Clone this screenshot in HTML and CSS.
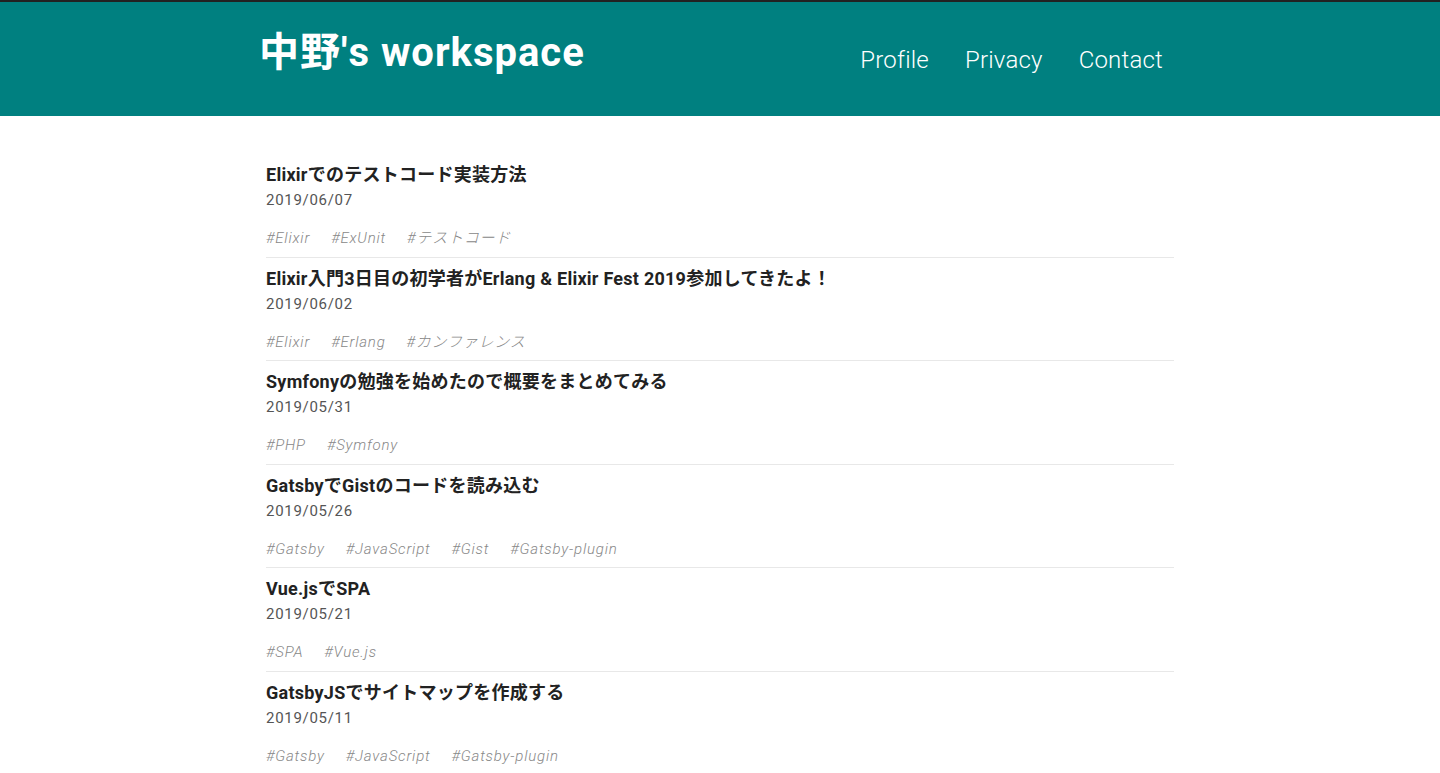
FILE: index.html
```html
<!DOCTYPE html>
<html lang="ja">
<head>
<meta charset="utf-8">
<title>中野's workspace</title>
<link rel="stylesheet" href="styles.css">
</head>
<body>
<header class="site-header">
  <div class="header-inner">
    <h1 class="site-title">中野's workspace</h1>
    <nav class="nav">
      <a href="#">Profile</a>
      <a href="#">Privacy</a>
      <a href="#">Contact</a>
    </nav>
  </div>
</header>
<main class="posts">
  <article class="post">
    <h2 class="post-title">Elixirでのテストコード実装方法</h2>
    <div class="post-date">2019/06/07</div>
    <ul class="tags"><li>#Elixir</li><li>#ExUnit</li><li>#テストコード</li></ul>
  </article>
  <article class="post">
    <h2 class="post-title">Elixir入門3日目の初学者がErlang &amp; Elixir Fest 2019参加してきたよ！</h2>
    <div class="post-date">2019/06/02</div>
    <ul class="tags"><li>#Elixir</li><li>#Erlang</li><li>#カンファレンス</li></ul>
  </article>
  <article class="post">
    <h2 class="post-title">Symfonyの勉強を始めたので概要をまとめてみる</h2>
    <div class="post-date">2019/05/31</div>
    <ul class="tags"><li>#PHP</li><li>#Symfony</li></ul>
  </article>
  <article class="post">
    <h2 class="post-title">GatsbyでGistのコードを読み込む</h2>
    <div class="post-date">2019/05/26</div>
    <ul class="tags"><li>#Gatsby</li><li>#JavaScript</li><li>#Gist</li><li>#Gatsby-plugin</li></ul>
  </article>
  <article class="post">
    <h2 class="post-title">Vue.jsでSPA</h2>
    <div class="post-date">2019/05/21</div>
    <ul class="tags"><li>#SPA</li><li>#Vue.js</li></ul>
  </article>
  <article class="post">
    <h2 class="post-title">GatsbyJSでサイトマップを作成する</h2>
    <div class="post-date">2019/05/11</div>
    <ul class="tags"><li>#Gatsby</li><li>#JavaScript</li><li>#Gatsby-plugin</li></ul>
  </article>
</main>
</body>
</html>
```
FILE: styles.css
```css
html, body {
  margin: 0;
  padding: 0;
}
body {
  font-family: "Roboto", "Noto Sans CJK JP", sans-serif;
  color: #222;
  background: #fff;
}
.site-header {
  background: #008080;
  border-top: 2px solid #222;
  height: 114px;
}
.header-inner {
  width: 904px;
  margin: 0 auto;
  padding-right: 18px;
  display: flex;
  justify-content: space-between;
  align-items: flex-start;
}
.site-title {
  margin: 28px 0 0;
  color: #fff;
  font-size: 40px;
  font-weight: 700;
  line-height: 46px;
  letter-spacing: 1px;
}
.nav {
  display: flex;
  gap: 36px;
  margin-top: 43px;
}
.nav a {
  color: #fff;
  text-decoration: none;
  font-size: 24px;
  font-weight: 300;
  line-height: 30px;
  letter-spacing: 0.2px;
}
.posts {
  width: 908px;
  margin: 0 auto;
  padding-top: 38px;
}
.post {
  padding: 9px 0 8.5px;
  border-bottom: 1px solid #e8e8e8;
}
.post:last-child {
  border-bottom: none;
}
.post-title {
  margin: 0;
  font-size: 18px;
  font-weight: 700;
  line-height: 24px;
  letter-spacing: 0.25px;
  color: #222;
}
.post-date {
  margin-top: 3px;
  font-size: 15px;
  line-height: 20px;
  letter-spacing: 0.7px;
  color: #555;
}
.tags {
  list-style: none;
  margin: 18px 0 0;
  padding: 0;
  display: flex;
  gap: 21px;
}
.tags li {
  font-size: 15px;
  line-height: 20px;
  letter-spacing: 0.8px;
  font-style: italic;
  font-weight: 300;
  color: #888;
}
```
